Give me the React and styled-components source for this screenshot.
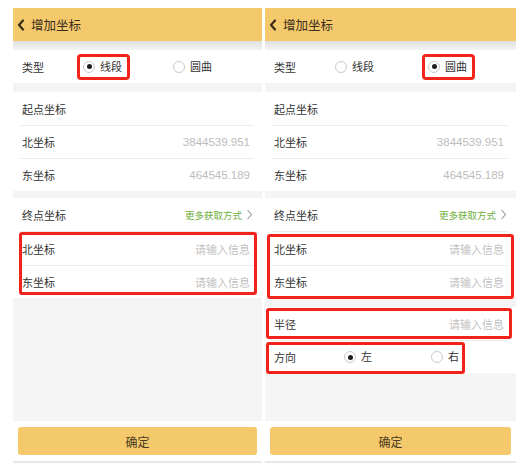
import React from 'react'
import styled, { createGlobalStyle } from 'styled-components'

const GlobalStyle = createGlobalStyle`
    html, body {
        margin: 0;
        padding: 0;
        background: #fff;
    }
    body {
        font-family: "Liberation Sans", "Noto Sans CJK SC", sans-serif;
        color: #333;
    }
`

function BackIcon() {
    return (
        <svg width="10" height="12" viewBox="0 0 10 12">
            <polyline points="7,1.5 3,6 7,10.5" fill="none" stroke="#3a2d18" strokeWidth="2.2" strokeLinecap="round" strokeLinejoin="round" />
        </svg>
    )
}

function ArrowRight() {
    return (
        <svg width="7" height="11" viewBox="0 0 7 11">
            <polyline points="1.5,1 5.5,5.5 1.5,10" fill="none" stroke="#999" strokeWidth="1.1" />
        </svg>
    )
}

function Option({ w, on, marked, children }) {
    return (
        <OptionCell $w={w}>
            <OptionBox $marked={marked}>
                <Radio $on={on} />
                {children}
            </OptionBox>
        </OptionCell>
    )
}

function Screen({ width, arc }) {
    return (
        <Phone $width={width}>
            <Header>
                <BackIcon />
                增加坐标
            </Header>
            <HeaderShade />

            <Section>
                <Row>
                    <Label $w={55}>类型</Label>
                    <Option w={arc ? 93 : 90} on={!arc} marked={!arc}>线段</Option>
                    <Option on={arc} marked={arc}>圆曲</Option>
                </Row>
            </Section>

            <Gap $h={9} />

            <Section>
                <Row>起点坐标</Row>
                <Row>
                    <Label>北坐标</Label>
                    <Value>3844539.951</Value>
                </Row>
                <Row>
                    <Label>东坐标</Label>
                    <Value>464545.189</Value>
                </Row>
            </Section>

            <Gap $h={7} />

            <Section>
                <Row>
                    <Label>终点坐标</Label>
                    <MoreLink>更多获取方式<ArrowRight /></MoreLink>
                </Row>
                <Group>
                    <Row>
                        <Label>北坐标</Label>
                        <Placeholder>请输入信息</Placeholder>
                    </Row>
                    <Row>
                        <Label>东坐标</Label>
                        <Placeholder>请输入信息</Placeholder>
                    </Row>
                    {arc
                        ? <Mark $t={2} $b={-1} $l={-5} $r={-6} />
                        : <Mark $t={0} $b={3} $l={-1} $r={-3} />}
                </Group>
            </Section>

            {arc && (
                <>
                    <Gap $h={9} />
                    <Section>
                        <Row>
                            <Label>半径</Label>
                            <Placeholder>请输入信息</Placeholder>
                            <Mark $t={1} $b={1} $l={-6} $r={-4} />
                        </Row>
                        <Row>
                            <Label $w={64}>方向</Label>
                            <Option w={87} on>左</Option>
                            <Option>右</Option>
                            <Mark $t={1} $b={-1} $l={-6} $r={43} />
                        </Row>
                    </Section>
                </>
            )}

            <Filler />

            <Footer>
                <Button>确定</Button>
            </Footer>
        </Phone>
    )
}

export default function App() {
    return (
        <>
            <GlobalStyle />
            <Page>
                <Screen width={249} />
                <Screen width={251} arc />
            </Page>
        </>
    )
}


const Page = styled.div`
    display: flex;
    align-items: flex-start;
    gap: 3px;
    width: 524px;
    height: 470px;
    padding: 8px 0 0 13px;
    box-sizing: border-box;
`

const Phone = styled.div`
    width: ${({ $width }) => $width}px;
    height: 455px;
    display: flex;
    flex-direction: column;
    background: #f5f5f5;
`

const Header = styled.div`
    flex: none;
    height: 33px;
    background: #f4c96c;
    display: flex;
    align-items: center;
    gap: 5px;
    padding-left: 3px;
    font-size: 12.5px;
    color: #3b2f1c;
`

const HeaderShade = styled.div`
    flex: none;
    height: 9px;
    background: linear-gradient(#e0e0e0, #f3f3f3);
`

const Gap = styled.div`
    flex: none;
    height: ${({ $h }) => $h}px;
    background: #f4f4f4;
`

const Section = styled.div`
    flex: none;
    background: #fff;
    padding: 0 8px 0 7px;
`

const Group = styled.div`
    position: relative;
    border-top: 1px solid #ececec;
`

const Row = styled.div`
    position: relative;
    box-sizing: border-box;
    height: ${({ $h }) => $h || 33}px;
    display: flex;
    align-items: center;
    padding: 0 4px 0 2px;
    font-size: 11px;
    color: #333;

    & + & {
        border-top: 1px solid #ececec;
    }
`

const Label = styled.div`
    flex: none;
    width: ${({ $w }) => ($w ? `${$w}px` : 'auto')};
`

const Value = styled.div`
    margin-left: auto;
    color: #bcbcbc;
    font-size: 11.5px;
`

const Placeholder = styled.div`
    margin-left: auto;
    color: #c2c2c2;
`

const MoreLink = styled.div`
    margin-left: auto;
    margin-right: -3px;
    display: flex;
    align-items: center;
    gap: 4px;
    font-size: 9.5px;
    color: #6fae3c;
`

const OptionCell = styled.div`
    flex: none;
    width: ${({ $w }) => ($w ? `${$w}px` : 'auto')};
`

const OptionBox = styled.div`
    display: inline-flex;
    align-items: center;
    gap: 5px;
    padding: 3px 5px 3px 3px;
    line-height: 14px;
    border: 3px solid ${({ $marked }) => ($marked ? '#f2231b' : 'transparent')};
    border-radius: 4px;
`

const Radio = styled.span`
    width: 12px;
    height: 12px;
    box-sizing: border-box;
    border-radius: 50%;
    border: 1px solid #c9c9c9;
    background: #fff;
    display: flex;
    align-items: center;
    justify-content: center;

    &::after {
        content: '';
        width: 5px;
        height: 5px;
        border-radius: 50%;
        background: #1e1e1e;
        display: ${({ $on }) => ($on ? 'block' : 'none')};
    }
`

const Mark = styled.span`
    position: absolute;
    top: ${({ $t }) => $t}px;
    bottom: ${({ $b }) => $b}px;
    left: ${({ $l }) => $l}px;
    right: ${({ $r }) => $r}px;
    border: 3px solid #f2231b;
    border-radius: 3px;
    pointer-events: none;
`

const Filler = styled.div`
    flex: 1;
`

const Footer = styled.div`
    flex: none;
    height: 42px;
    box-sizing: border-box;
    padding: 6px 5px 0;
    background: #fff;
    border-bottom: 2px solid #e8e8e8;
`

const Button = styled.div`
    height: 28px;
    border-radius: 3px;
    background: #f4c96c;
    display: flex;
    align-items: center;
    justify-content: center;
    font-size: 12px;
    color: #4a3b22;
`
